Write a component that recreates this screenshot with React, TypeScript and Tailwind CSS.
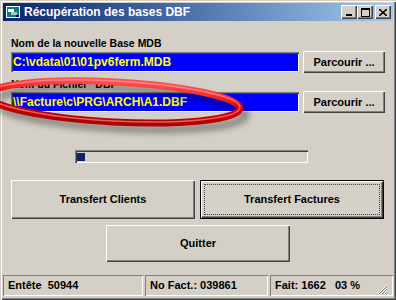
import React from "react"

const font = { fontFamily: '"Liberation Sans", Arial, sans-serif' }

function Btn({ children, className = "", focus = false }: { children: React.ReactNode; className?: string; focus?: boolean }) {
  return (
    <div
      className={`flex items-center justify-center bg-[#d4d0c8] text-[11px] font-bold text-black ${
        focus
          ? "border border-black shadow-[inset_1px_1px_0_#ffffff,inset_-1px_-1px_0_#404040,inset_-2px_-2px_0_#808080]"
          : "shadow-[inset_1px_1px_0_#ffffff,inset_-1px_-1px_0_#404040,inset_-2px_-2px_0_#808080]"
      } ${className}`}
    >
      {focus ? (
        <div className="flex h-full w-full items-center justify-center p-[3px]">
          <div className="flex h-full w-full items-center justify-center border border-dotted border-[#404040]">
            {children}
          </div>
        </div>
      ) : (
        children
      )}
    </div>
  )
}

function Field({ value }: { value: string }) {
  return (
    <div className="flex h-[20px] w-[288px] items-center bg-[#0000ff] px-[2px] text-[12px] font-bold text-[#ffff00] shadow-[inset_1px_1px_0_#808080,inset_2px_2px_0_#404040,inset_-1px_-1px_0_#ffffff]">
      {value}
    </div>
  )
}

function Panel({ children, className = "" }: { children: React.ReactNode; className?: string }) {
  return (
    <div className={`flex h-[21px] items-center px-[5px] text-[11px] font-bold text-black shadow-[inset_1px_1px_0_#808080,inset_-1px_-1px_0_#ffffff] ${className}`}>
      {children}
    </div>
  )
}

export default function App() {
  return (
    <div style={font} className="relative h-[300px] w-[396px] overflow-hidden bg-[#d4d0c8] p-[3px] shadow-[inset_1px_1px_0_#d4d0c8,inset_2px_2px_0_#ffffff,inset_-1px_-1px_0_#404040,inset_-2px_-2px_0_#808080]">
      {/* Title bar */}
      <div className="flex h-[18px] items-center bg-gradient-to-r from-[#0a246a] to-[#a6caf0] pl-[3px] pr-[2px]">
        <svg width="14" height="14" viewBox="0 0 14 14" className="mr-[4px]">
          <rect x="0" y="1" width="14" height="12" fill="#ffffff" />
          <rect x="1" y="2" width="12" height="10" fill="#008080" />
          <rect x="2" y="4" width="6" height="3" fill="#ffffff" />
          <rect x="5" y="7" width="6" height="3" fill="#c0c0c0" />
          <rect x="10" y="10" width="3" height="2" fill="#000080" />
        </svg>
        <span className="text-[12px] font-bold text-white">Récupération des bases DBF</span>
        <div className="ml-auto flex items-center">
          <div className="flex h-[14px] w-[16px] items-end justify-center bg-[#d4d0c8] pb-[3px] shadow-[inset_1px_1px_0_#ffffff,inset_-1px_-1px_0_#404040,inset_-2px_-2px_0_#808080]">
            <div className="h-[2px] w-[6px] bg-black" />
          </div>
          <div className="flex h-[14px] w-[16px] items-center justify-center bg-[#d4d0c8] shadow-[inset_1px_1px_0_#ffffff,inset_-1px_-1px_0_#404040,inset_-2px_-2px_0_#808080]">
            <div className="h-[9px] w-[9px] border border-t-2 border-black" />
          </div>
          <div className="ml-[2px] flex h-[14px] w-[16px] items-center justify-center bg-[#d4d0c8] shadow-[inset_1px_1px_0_#ffffff,inset_-1px_-1px_0_#404040,inset_-2px_-2px_0_#808080]">
            <svg width="8" height="7" viewBox="0 0 8 7">
              <path d="M0 0L8 7M8 0L0 7" stroke="#000" strokeWidth="1.6" />
            </svg>
          </div>
        </div>
      </div>

      {/* Content */}
      <div className="flex flex-col px-[8px] pt-[16px]">
        <div className="text-[10.5px] font-bold leading-[13px] text-black">Nom de la nouvelle Base MDB</div>
        <div className="mt-[1px] flex items-center gap-[4px]">
          <Field value="C:\vdata\01\01pv6ferm.MDB" />
          <Btn className="h-[22px] w-[82px]">Parcourir ...</Btn>
        </div>

        <div className="mt-[5px] text-[10.5px] font-bold leading-[13px] text-black">Nom du Fichier "DBF"</div>
        <div className="flex items-center gap-[4px]">
          <Field value="\\Facture\c\PRG\ARCH\A1.DBF" />
          <Btn className="h-[22px] w-[82px]">Parcourir ...</Btn>
        </div>

        {/* Progress */}
        <div className="ml-[64px] mt-[37px] flex h-[13px] w-[233px] items-center bg-[#d4d0c8] px-[2px] shadow-[inset_1px_1px_0_#808080,inset_2px_2px_0_#404040,inset_-1px_-1px_0_#ffffff]">
          <div className="h-[8px] w-[8px] bg-[#0a246a]" />
        </div>

        <div className="mt-[17px] flex gap-[5px]">
          <Btn className="h-[39px] w-[184px]">Transfert Clients</Btn>
          <Btn className="h-[39px] w-[184px]" focus>Transfert Factures</Btn>
        </div>

        <div className="mt-[6px] flex justify-center">
          <Btn className="h-[37px] w-[184px]">Quitter</Btn>
        </div>
      </div>

      {/* Status bar */}
      <div className="absolute bottom-[3px] left-[3px] right-[3px] flex h-[24px] items-end gap-[2px] pb-[1px]">
        <Panel className="w-[140px]">Entête&nbsp;&nbsp;50944</Panel>
        <Panel className="w-[123px]">No Fact.: 039861</Panel>
        <Panel className="flex-1">
          Fait: 1662&nbsp;&nbsp;&nbsp;03 %
          <svg width="11" height="11" viewBox="0 0 11 11" className="ml-auto mt-[8px]">
            <path d="M10 1L1 10M10 4L4 10M10 7L7 10" stroke="#ffffff" strokeWidth="1" />
            <path d="M10 2L2 10M10 5L5 10M10 8L8 10" stroke="#808080" strokeWidth="1" />
          </svg>
        </Panel>
      </div>

      {/* Red annotation ellipse */}
      <svg className="pointer-events-none absolute left-0 top-0" width="396" height="300" viewBox="0 0 396 300">
        <defs>
          <filter id="sh" x="-20%" y="-50%" width="140%" height="200%">
            <feGaussianBlur stdDeviation="3" />
          </filter>
          <linearGradient id="rg" x1="0" y1="0" x2="0" y2="1">
            <stop offset="0" stopColor="#ff5050" />
            <stop offset="0.5" stopColor="#e00000" />
            <stop offset="1" stopColor="#b00000" />
          </linearGradient>
        </defs>
        <g transform="rotate(3 115 102)">
          <ellipse cx="120" cy="108" rx="126" ry="20" fill="none" stroke="#000" strokeOpacity="0.35" strokeWidth="8" filter="url(#sh)" />
          <ellipse cx="114" cy="102" rx="126" ry="20" fill="none" stroke="url(#rg)" strokeWidth="7" />
          <ellipse cx="114" cy="101" rx="126" ry="20" fill="none" stroke="#ffb0b0" strokeOpacity="0.55" strokeWidth="1.5" />
        </g>
      </svg>
    </div>
  )
}
